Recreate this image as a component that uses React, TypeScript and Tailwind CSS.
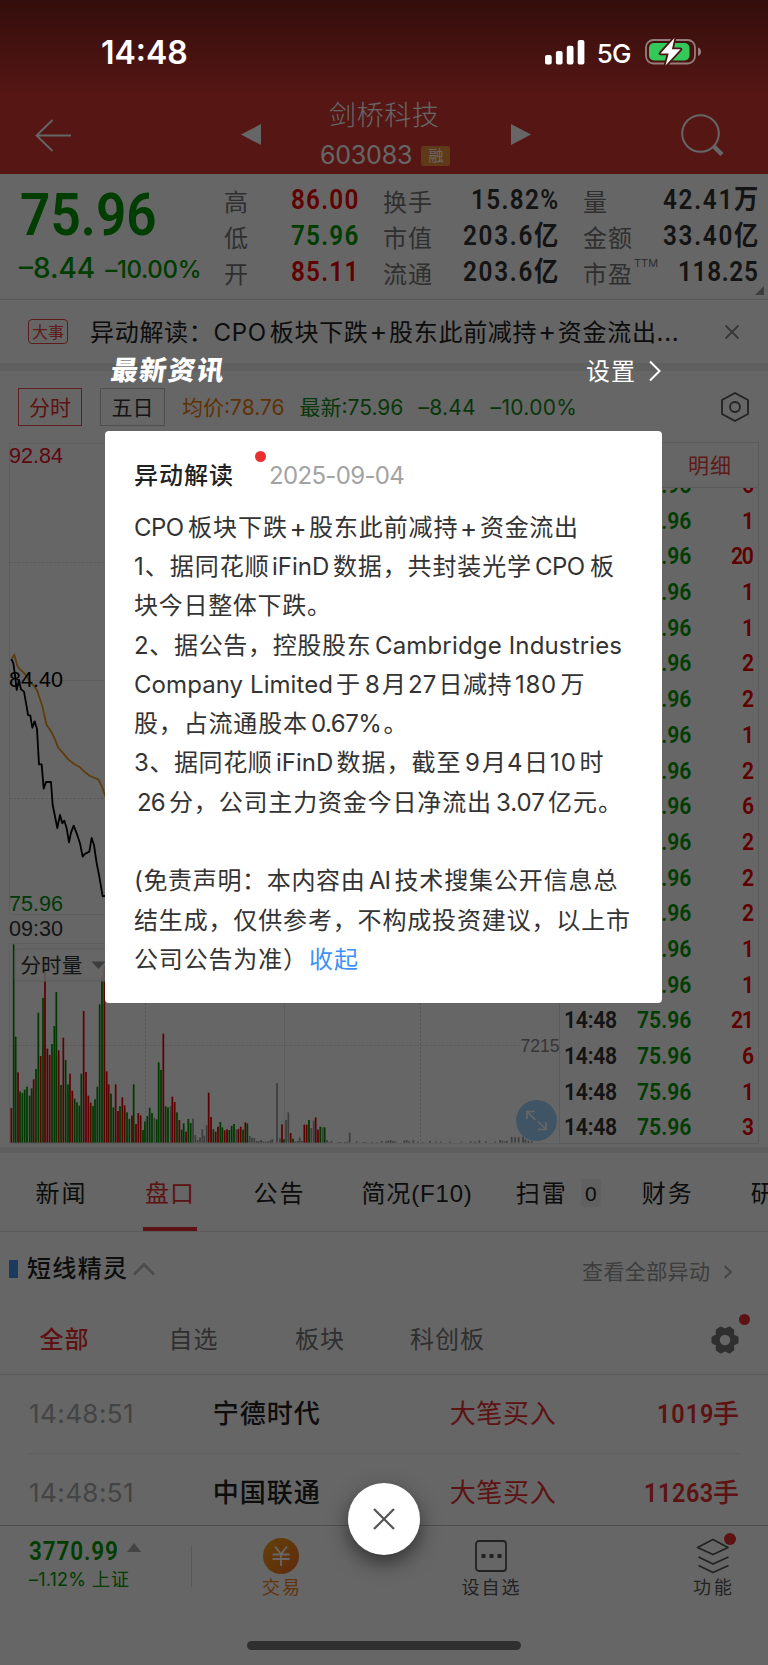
import { useLayoutEffect, useRef, type ReactNode } from "react";

/** Single line of text whose tracking is adjusted so that it takes up `w` pixels. */
function Fit({ w, className = "", children }: { w: number; className?: string; children: ReactNode }) {
  const ref = useRef<HTMLSpanElement>(null);
  useLayoutEffect(() => {
    const el = ref.current;
    if (!el) return;
    el.style.letterSpacing = "0px";
    el.style.marginRight = "0px";
    const gaps = Array.from(el.textContent ?? "").length - 1;
    if (gaps < 1) return;
    const tracking = (w - el.offsetWidth) / gaps;
    el.style.letterSpacing = `${tracking}px`;
    el.style.marginRight = `${-tracking}px`;
  }, [w]);
  return (
    <span ref={ref} className={`inline-block shrink-0 whitespace-nowrap leading-none ${className}`}>
      {children}
    </span>
  );
}

/** Narrow, sturdy figures used for prices and quantities. */
function Din({ w, className = "", children }: { w: number; className?: string; children: ReactNode }) {
  return (
    <span className={`flex shrink-0 ${className}`} style={{ width: w }}>
      <Fit w={w / 0.9} className="origin-left scale-x-90 font-['Roboto','Noto_Sans_CJK_SC',sans-serif] font-semibold">
        {children}
      </Fit>
    </span>
  );
}

type Bar = [number, number, string];
const G = "#009000";
const R = "#e60000";
const N = "#999999";
const bars: Bar[] = [
  [34, 534, R], [41, 43, G], [47, 320, G], [54, 427, R], [60, 484, G], [67, 489, G], [74, 479, G], [81, 470, G],
  [89, 497, G], [95, 475, G], [101, 448, R], [108, 417, G], [115, 248, G], [122, 378, R], [129, 204, G], [135, 80, R],
  [142, 356, R], [149, 375, R], [156, 342, G], [163, 288, G], [169, 186, G], [176, 361, R], [183, 465, G], [190, 323, R],
  [197, 390, G], [204, 463, G], [210, 431, R], [217, 482, R], [224, 506, G], [231, 517, G], [238, 527, G], [244, 431, G],
  [251, 243, R], [258, 426, R], [265, 497, R], [272, 518, R], [279, 528, G], [285, 508, G], [292, 470, G], [299, 223, G],
  [306, 140, G], [313, 108, R], [320, 424, R], [326, 463, R], [333, 491, G], [340, 532, G], [347, 463, R], [354, 543, R],
  [360, 528, G], [367, 502, R], [374, 526, R], [381, 547, G], [388, 567, G], [396, 557, R], [401, 463, G], [408, 582, R],
  [415, 549, R], [422, 556, R], [429, 600, G], [435, 574, G], [442, 558, G], [449, 533, G], [456, 549, G], [463, 563, N],
  [470, 568, G], [476, 397, G], [483, 420, G], [490, 311, R], [497, 529, G], [504, 532, G], [512, 528, N], [517, 500, R],
  [524, 516, R], [531, 547, G], [538, 570, R], [545, 599, G], [551, 580, G], [558, 605, R], [565, 567, G], [572, 579, G],
  [579, 566, N], [586, 615, N], [593, 630, N], [600, 622, N], [607, 598, N], [613, 617, N], [620, 586, N], [626, 488, R],
  [633, 561, R], [640, 598, G], [647, 605, R], [654, 590, R], [661, 576, G], [667, 592, G], [674, 601, R], [681, 598, R],
  [688, 600, G], [695, 588, G], [702, 582, G], [709, 599, N], [715, 597, R], [722, 590, R], [729, 599, G], [736, 577, R],
  [742, 580, G], [749, 618, N], [756, 623, N], [763, 624, N], [770, 633, N], [776, 633, N], [783, 630, N], [790, 634, N],
  [797, 635, N], [804, 634, N], [811, 631, N], [817, 627, N], [831, 459, N], [840, 625, N], [846, 583, R], [852, 628, G],
  [858, 570, N], [865, 547, N], [872, 609, R], [879, 626, G], [886, 634, N], [893, 633, N], [899, 622, N], [906, 633, N],
  [913, 584, R], [920, 584, R], [927, 570, G], [934, 594, N], [941, 572, N], [947, 562, R], [954, 599, R], [961, 590, G],
  [968, 592, N], [974, 592, G], [981, 630, N], [988, 636, N], [995, 633, N], [1015, 636, N], [1022, 636, N], [1035, 636, N],
  [1042, 635, N], [1049, 608, N], [1070, 634, N], [1090, 636, N], [1097, 636, N], [1117, 636, N], [1131, 636, N],
  [1145, 633, N], [1158, 634, N], [1165, 632, N], [1172, 630, N], [1179, 633, N], [1186, 634, N], [1213, 632, N],
  [1220, 630, N], [1227, 634, N], [1240, 631, N], [1254, 635, N], [1268, 636, N], [1290, 633, N], [1308, 635, N],
  [1322, 635, N], [1350, 635, N], [1384, 635, N], [1412, 634, N], [1425, 635, N], [1438, 631, N], [1458, 634, N],
  [1485, 635, N], [1500, 630, N], [1507, 632, N], [1514, 634, N], [1521, 632, N], [1535, 621, N], [1545, 622, N],
  [1556, 622, N], [1569, 620, N], [1576, 628, N], [1585, 632, N], [1595, 634, N],
];

const avgLine =
  "36,685 43,674 52,708 60,718 75,732 90,755 104,770 112,783 120,808 128,832 135,865 140,885 155,907 165,928 174,952 190,970 205,988 222,1002 240,1012 255,1027 270,1038 295,1048 305,1068 320,1110";
const priceLine =
  "34,687 40,700 45,735 50,780 57,750 63,778 72,785 80,830 84,855 91,857 97,893 104,874 111,897 117,1003 125,1003 131,1076 138,1056 153,1056 158,1125 172,1194 180,1155 187,1180 193,1172 200,1195 207,1237 213,1208 221,1187 230,1210 240,1240 248,1280 254,1272 268,1265 275,1224 282,1245 290,1300 298,1340 308,1399 320,1396";

function Header() {
  return (
    <header className="flex h-[174px] items-start bg-linear-to-b from-[#80241f] from-0% via-[#d43832] via-[92px] to-[#d43832] text-white">
      <svg className="mt-[118px] ml-[34px] h-9 w-10" viewBox="0 0 40 36" fill="none" stroke="currentColor" strokeWidth="1.8">
        <path d="M37 17.5H2.5M18.5 2 2.5 17.5 18.5 33" />
      </svg>
      <svg className="mt-[123px] ml-[166px] h-[23px] w-[22px]" viewBox="0 0 22 23" fill="currentColor">
        <path d="M1 11.5 21 1v21z" />
      </svg>
      <div className="ml-[58px] flex w-[134px] flex-col items-start pt-[102px]">
        <Fit w={110} className="ml-[9px] text-[27px] font-light">剑桥科技</Fit>
        <div className="mt-[14px] flex items-center text-[25px]">
          <Fit w={92} className="font-normal">603083</Fit>
          <span className="ml-[9px] flex h-5 w-[29px] items-center justify-center rounded-xs bg-[#ef8f3c] text-[15px] leading-none">融</span>
        </div>
      </div>
      <svg className="mt-[123px] ml-[56px] h-[23px] w-[22px]" viewBox="0 0 22 23" fill="currentColor">
        <path d="M21 11.5 1 1v21z" />
      </svg>
      <svg className="mt-[112px] ml-[149px] h-11 w-11" viewBox="0 0 44 44" fill="none" stroke="currentColor">
        <circle cx="19.5" cy="21.5" r="18.3" strokeWidth="2" />
        <path d="m33 34.5 8 8" strokeWidth="4.5" />
      </svg>
    </header>
  );
}

function Quote() {
  return (
    <section className="relative flex h-[126px] border-b border-[#dedede] bg-white pt-[9px]">
      <div className="w-[224px] pt-0.5 pl-[20px] text-[#009800]">
        <Din w={137} className="text-[59px]">75.96</Din>
        <div className="mt-[10px] -ml-px flex items-baseline">
          <Fit w={76} className="text-[28px] font-medium">–8.44</Fit>
          <Fit w={96} className="ml-[10px] text-[24px] font-medium">–10.00%</Fit>
        </div>
      </div>
      <div className="flex w-[134px] flex-col">
        {[["高", "86.00", "text-[#f00000]"], ["低", "75.96", "text-[#009800]"], ["开", "85.11", "text-[#f00000]"]].map(([k, v, c]) => (
          <div key={k} className="flex h-[35.7px] items-center justify-between">
            <span className="mt-[5px] text-[24px] leading-none text-[#777]">{k}</span>
            <Din w={67} className={`text-[27px] ${c}`}>{v}</Din>
          </div>
        ))}
      </div>
      <div className="ml-[25px] flex w-[175px] flex-col">
        {([["换手", "15.82%", 87], ["市值", "203.6亿", 95], ["流通", "203.6亿", 95]] as [string, string, number][]).map(([k, v, w]) => (
          <div key={k} className="flex h-[35.7px] items-center justify-between">
            <Fit w={49} className="mt-[5px] text-[24px] text-[#777]">{k}</Fit>
            <Din w={w} className="text-[27px] text-[#333]">{v}</Din>
          </div>
        ))}
      </div>
      <div className="ml-[25px] flex w-[175px] flex-col">
        {([["量", "42.41万", 95], ["金额", "33.40亿", 95], ["市盈", "118.25", 80]] as [string, string, number][]).map(([k, v, w]) => (
          <div key={k} className="flex h-[35.7px] items-center justify-between">
            <span className="flex items-start">
              <Fit w={49} className="mt-[5px] text-[24px] text-[#777]">{k}</Fit>
              {k === "市盈" && <Fit w={24} className="ml-[2px] text-[11px] text-[#777]">TTM</Fit>}
            </span>
            <Din w={w} className="text-[27px] text-[#333]">{v}</Din>
          </div>
        ))}
      </div>
      <svg className="absolute top-[112px] left-[755px] h-[9px] w-[9px]" viewBox="0 0 9 9">
        <path d="M9 0v9H0z" fill="#999" />
      </svg>
    </section>
  );
}

function NewsRow() {
  return (
    <section className="flex h-[63px] items-center bg-white">
      <span className="ml-[28px] flex h-[25px] w-10 items-center justify-center rounded border border-[#e9453f] text-[#e9453f]">
        <Fit w={32} className="text-[16px]">大事</Fit>
      </span>
      <Fit w={589} className="ml-[22px] text-[24px] text-[#222] [text-autospace:normal]">
        异动解读：CPO板块下跌<span className="px-px text-[27px] leading-none">+</span>股东此前减持<span className="px-px text-[27px] leading-none">+</span>资金流出...
      </Fit>
      <svg className="ml-[45px] h-4 w-4" viewBox="0 0 16 16" stroke="#8c8c8c" strokeWidth="1.8">
        <path d="m1.5 1.5 13 13M14.5 1.5l-13 13" />
      </svg>
    </section>
  );
}

function ChartTabs() {
  return (
    <section className="flex h-[59px] items-center bg-white pt-[13px] text-[21px]">
      <span className="ml-[18px] flex h-[38px] w-16 items-center justify-center border border-[#f05050] text-[#e93030]">
        <Fit w={42}>分时</Fit>
      </span>
      <span className="ml-[18px] flex h-[38px] w-[65px] items-center justify-center border border-[#c4c4c4] text-[#333]">
        <Fit w={42}>五日</Fit>
      </span>
      <Fit w={103} className="ml-[17px] text-[#f07c0c]">均价:78.76</Fit>
      <div className="ml-[15px] flex text-[#128a1a]">
        <Fit w={104}>最新:75.96</Fit>
        <Fit w={57} className="ml-[15px]">–8.44</Fit>
        <Fit w={86} className="ml-[15px]">–10.00%</Fit>
      </div>
      <svg className="ml-[142px] h-8 w-8" viewBox="0 0 32 32" fill="none" stroke="#555" strokeWidth="1.8">
        <path d="M16 2 29 9v14l-13 7L3 23V9z" strokeLinejoin="round" />
        <circle cx="16" cy="16" r="5" />
      </svg>
    </section>
  );
}

function Chart() {
  return (
    <svg className="h-[717px] w-[559px] shrink-0 font-['Liberation_Sans',Arial,sans-serif]" viewBox="0 0 559 717">
      <g stroke="#ebebeb" fill="none">
        <path d="M559 13.5H9.5v471M9.5 250.5H559M9.5 484.5H559M9.5 513.5V713.5H559M284.5 13V713M9.5 513.5H559" />
        <path d="M9.5 132.5H559M9.5 368.5H559M9.5 615.5H520M145.5 13V713M420.5 13V713" stroke="#d8d8d8" strokeDasharray="2 2" />
      </g>
      <g transform="translate(0 500) scale(.33333)">
        {bars.map(([x, y, c]) => (
          <rect key={x} x={x - 2.6} y={y} width="5.2" height={638 - y} fill={c} />
        ))}
      </g>
      <g transform="scale(.33333)" fill="none" strokeWidth="5.4" strokeLinejoin="round">
        <polyline points={avgLine} stroke="#e89a1c" />
        <polyline points={priceLine} stroke="#000" />
      </g>
      <g fontSize="21.6">
        <text x="9" y="32.8" fill="#ee1028">92.84</text>
        <text x="9" y="256.7" fill="#000">84.40</text>
        <text x="9" y="480.8" fill="#009010">75.96</text>
        <text x="9" y="505.6" fill="#333">09:30</text>
      </g>
      <rect x="15" y="519" width="100" height="32" rx="2" fill="#fff" fillOpacity=".8" stroke="#e4e4e4" />
      <text x="20.5" y="542.5" fontSize="20.6" fill="#333" fontFamily="Noto Sans CJK SC, sans-serif">分时量</text>
      <path d="M91.5 531.5h14l-7 7.5z" fill="#999" />
      <text x="520.5" y="621.5" fontSize="17.6" fill="#888">7215</text>
      <circle cx="536.5" cy="690.5" r="20.5" fill="#9fd4fc" />
      <path d="M527 689v-7.500h8M528 682.500l7.500 7.500M538 691.500l7.500 7.500M546 692v7.500h-8" fill="none" stroke="#fff" strokeWidth="1.7" />
    </svg>
  );
}

const trades: [string, string][] = [
  ["", "6"], ["", "1"], ["", "20"], ["", "1"], ["", "1"], ["", "2"], ["", "2"], ["", "1"], ["", "2"], ["", "6"],
  ["", "2"], ["", "2"], ["", "2"], ["", "1"], ["", "1"], ["14:48", "21"], ["14:48", "6"], ["14:48", "1"], ["14:48", "3"],
];

function Trades() {
  return (
    <div className="mt-3 flex h-[702px] w-[200px] flex-col border border-[#e4e4e4]">
      <div className="flex h-[45px] shrink-0 items-center border-b border-[#e4e4e4] pl-[128px] text-[21px] text-[#e9453f]">
        <Fit w={43}>明细</Fit>
      </div>
      <div className="flex min-h-0 flex-1 flex-col justify-end overflow-hidden">
        <div className="-mb-[3px]">
          {trades.map(([t, n], i) => (
            <div key={i} className="flex h-[35.7px] shrink-0 items-center text-[23.500px]">
              <span className="ml-1 flex w-[73px] text-[#333]">{t && <Din w={53}>{t}</Din>}</span>
              <Din w={54} className="text-[#009800]">75.96</Din>
              <span className="flex flex-1 justify-end pr-[4px] text-[#f00000]">
                <Din w={n.length > 1 ? 23 : 12.500}>{n}</Din>
              </span>
            </div>
          ))}
        </div>
      </div>
    </div>
  );
}

function InfoTabs() {
  return (
    <nav className="flex h-[79px] items-center overflow-hidden border-b border-[#e0e0e0] bg-white text-[24px] text-[#222]">
      <Fit w={50} className="mt-1 ml-[35.500px]">新闻</Fit>
      <span className="ml-[57px] flex h-full w-[54px] flex-col items-center justify-between text-[#e93030]">
        <Fit w={49} className="mt-[29px]">盘口</Fit>
        <span className="h-1 w-[54px] bg-[#e93030]" />
      </span>
      <Fit w={50} className="mt-1 ml-[57px]">公告</Fit>
      <Fit w={110} className="mt-1 ml-[58px] font-['Liberation_Sans','Noto_Sans_CJK_SC',sans-serif]">简况(F10)</Fit>
      <Fit w={50} className="mt-1 ml-[44px]">扫雷</Fit>
      <span className="mt-0.5 ml-[15px] flex h-[28px] w-5 shrink-0 items-center justify-center bg-[#f2f2f2] font-['Liberation_Sans',sans-serif] text-[21px] leading-none">0</span>
      <Fit w={50} className="mt-1 ml-[41px]">财务</Fit>
      <Fit w={50} className="mt-1 ml-[59px]">研</Fit>
    </nav>
  );
}

function Section() {
  return (
    <section className="bg-white">
      <div className="flex h-[74px] items-center">
        <span className="ml-[9px] h-[18px] w-[9px] bg-[#4691ee]" />
        <Fit w={100} className="ml-[9px] text-[24px] font-medium text-[#222]">短线精灵</Fit>
        <svg className="ml-[6px] h-4 w-[22px]" viewBox="0 0 22 16" fill="none" stroke="#bbb" strokeWidth="2.800">
          <path d="m1 13.500 10-10 10 10" />
        </svg>
        <Fit w={128} className="mt-[4px] ml-[427px] text-[21px] text-[#999]">查看全部异动</Fit>
        <svg className="mt-[5px] ml-[13px] h-3.5 w-[10px]" viewBox="0 0 10 14" fill="none" stroke="#aaa" strokeWidth="1.8">
          <path d="m1.500 1 6.500 6-6.500 6" />
        </svg>
      </div>
      <div className="relative flex h-[69px] items-center border-b border-[#e0e0e0] text-[24px] text-[#777]">
        <Fit w={49} className="ml-[39.500px] font-medium text-[#e93030]">全部</Fit>
        <Fit w={49} className="ml-[80px]">自选</Fit>
        <Fit w={49} className="ml-[77.500px]">板块</Fit>
        <Fit w={74} className="ml-[66px]">科创板</Fit>
        <svg className="ml-[227px] h-7 w-7" viewBox="0 0 28 28">
          <path
            fill="#777"
            fillRule="evenodd"
            strokeLinejoin="round"
            stroke="#777"
            strokeWidth="2"
            d="M9.500 1.500 14 3.700 18.500 1.500 22.300 4.200 22 9.200 26.500 11.500v5L22 18.800l.3 5L18.500 26.500 14 24.300 9.500 26.500 5.700 23.800 6 18.800 1.500 16.500v-5L6 9.200l-.3-5zM14 7.800a6.200 6.200 0 1 0 0 12.400 6.200 6.200 0 0 0 0-12.400z"
          />
        </svg>
        <span className="absolute top-[8px] left-[739px] h-[11px] w-[11px] rounded-full bg-[#e93030]" />
      </div>
      {([["宁德时代", "1019", 56], ["中国联通", "11263", 69]] as [string, string, number][]).map(([name, qty, w], i) => (
        <div key={name} className="px-[27px]">
          <div className={`flex items-center text-[26px] ${i === 0 ? "h-[79px] border-b border-[#f0f0f0]" : "h-[71px] pt-[6px]"}`}>
            <Fit w={105} className="ml-[2px] text-[#aaa]">14:48:51</Fit>
            <Fit w={107} className="ml-[79px] font-medium text-[#222]">{name}</Fit>
            <Fit w={106} className="ml-[130px] text-[#e93030]">大笔买入</Fit>
            <span className="flex flex-1 items-center justify-end pr-[2px] text-[#e93030]">
              <Din w={w}>{qty}</Din>
              <span className="font-medium leading-none">手</span>
            </span>
          </div>
        </div>
      ))}
    </section>
  );
}

function BottomBar() {
  return (
    <footer className="flex h-[139px] border-t border-[#c0c0c0] bg-white text-[18px] text-[#555]">
      <div className="w-[191px] pt-[13px] pl-[29px] text-[#009800]">
        <div className="flex items-center">
          <Din w={89} className="text-[25px]">3770.99</Din>
          <svg className="-mt-[8px] ml-[9px] h-[9px] w-[14px]" viewBox="0 0 14 9">
            <path d="m7 0 7 9H0z" fill="#aaa" />
          </svg>
        </div>
        <div className="mt-[7px] flex">
          <Fit w={57}>–1.12%</Fit>
          <Fit w={37} className="ml-[6px]">上证</Fit>
        </div>
      </div>
      <span className="mt-[19px] h-[42px] w-px bg-[#dcdcdc]" />
      <div className="ml-[62px] flex w-[54px] flex-col items-center pt-3 text-[#f58220]">
        <svg className="h-9 w-9" viewBox="0 0 36 36">
          <defs>
            <linearGradient id="coin" x1="0" y1="0" x2="1" y2="1">
              <stop offset="0" stopColor="#f8a21c" />
              <stop offset="1" stopColor="#ef6a1c" />
            </linearGradient>
          </defs>
          <circle cx="18" cy="18" r="18" fill="url(#coin)" />
          <path d="m12 8.500 6 7.500 6-7.500M9.500 16.500h17M9.500 21h17M18 16v12" fill="none" stroke="#fff" strokeWidth="1.8" />
        </svg>
        <Fit w={38} className="mt-[5px]">交易</Fit>
      </div>
      <div className="ml-[151.500px] flex w-[62px] flex-col items-center pt-3.5">
        <svg className="h-8 w-8" viewBox="0 0 32 32" fill="none" stroke="#555" strokeWidth="1.800">
          <rect x="1" y="1" width="30" height="30" rx="3" />
          <path d="M6.500 16h4M14.500 16h4M22.500 16h4" strokeWidth="4" />
        </svg>
        <Fit w={58} className="mt-[7px]">设自选</Fit>
      </div>
      <div className="relative ml-[169px] flex w-[44px] flex-col items-center pt-3">
        <svg className="h-9 w-9" viewBox="0 0 36 36" fill="none" stroke="#555" strokeWidth="1.800">
          <path d="M18 1.500 33 9.500 18 16.500 2.500 9.500zM3.500 19 18 26l15.500-7M3.500 27.500l14.500 7 15.500-7" strokeLinejoin="round" />
        </svg>
        <Fit w={39} className="mt-[5px]">功能</Fit>
        <span className="absolute top-[7px] left-[33px] h-3 w-3 rounded-full bg-[#e93030]" />
      </div>
    </footer>
  );
}

function StatusBar() {
  return (
    <div className="absolute inset-x-0 top-0 flex h-[100px] items-center text-white">
      <Fit w={87} className="mt-[6px] ml-[101px] text-[32px] font-semibold">14:48</Fit>
      <svg className="mt-[3px] ml-[357px] h-[26px] w-10" viewBox="0 0 40 26" fill="currentColor">
        <rect x="0" y="16" width="6.700" height="9.500" rx="2" />
        <rect x="10.900" y="12" width="6.700" height="13.500" rx="2" />
        <rect x="21.800" y="6.700" width="6.700" height="18.800" rx="2" />
        <rect x="32.700" y="1" width="6.700" height="24.500" rx="2" />
      </svg>
      <Fit w={35} className="mt-[7px] ml-[12px] text-[26px] font-medium">5G</Fit>
      <svg className="mt-[4px] ml-[13.500px] h-7 w-[58px]" viewBox="0 0 58 28">
        <rect x="1" y="2" width="49" height="23.500" rx="7.500" fill="none" stroke="#fff" strokeOpacity=".45" strokeWidth="1.800" />
        <path d="M53 9.500c2.500.8 3 2.500 3 4.300s-.5 3.500-3 4.300z" fill="#fff" fillOpacity=".45" />
        <rect x="4" y="5" width="40.500" height="17.500" rx="5" fill="#34c759" />
        <path d="M29.500 0 15.500 15.500h8.200L20.500 27.500 35.500 11.300h-8.600z" fill="#fff" stroke="#4a1412" strokeWidth="3.600" strokeLinejoin="round" paintOrder="stroke" />
      </svg>
    </div>
  );
}

/** Runs of a paragraph line: offset from the line's left edge, width, text. */
type Run = [number, number, string];
const lines: Run[][] = [
  [[0, 50, "CPO"], [54, 99, "板块下跌"], [155.5, 15, "+"], [175, 148.5, "股东此前减持"], [326, 15, "+"], [346, 98, "资金流出"]],
  [[0, 135, "1、据同花顺"], [138, 57, "iFinD"], [199, 198, "数据，共封装光学"], [401, 50, "CPO"], [456, 24, "板"]],
  [[0, 197, "块今日整体下跌。"]],
  [[0, 237, "2、据公告，控股股东"], [241, 247, "Cambridge Industries"]],
  [[0, 199, "Company Limited"], [202, 24, "于"], [231, 16, "8"], [248, 24, "月"], [274, 28, "27"], [304.5, 73, "日减持"], [381, 41.5, "180"], [426.5, 24, "万"]],
  [[0, 173, "股，占流通股本"], [177, 71, "0.67%"], [249.5, 24, "。"]],
  [[0, 138, "3、据同花顺"], [142, 57, "iFinD"], [202.5, 124, "数据，截至"], [331, 16, "9"], [348, 24, "月"], [373, 16, "4"], [390, 24, "日"], [416, 26, "10"], [445.5, 24, "时"]],
  [[3, 29, "26"], [35, 322, "分，公司主力资金今日净流出"], [362, 49, "3.07"], [414, 74, "亿元。"]],
  [],
  [[0, 231, "(免责声明：本内容由"], [235, 22, "AI"], [260.5, 223, "技术搜集公开信息总"]],
  [[0, 496, "结生成，仅供参考，不构成投资建议，以上市"]],
];

function Line({ runs }: { runs: Run[] }) {
  return (
    <div className="flex h-[39.3px] items-center">
      {runs.map(([x, w, text], i) => (
        <span
          key={i}
          className="flex shrink-0"
          style={{ marginLeft: i === 0 ? x : 0, width: i + 1 < runs.length ? runs[i + 1][0] - x : w }}
        >
          <Fit w={w} className={text === "+" ? "text-[26px]" : ""}>{text}</Fit>
        </span>
      ))}
    </div>
  );
}

function Modal() {
  return (
    <div className="absolute top-[355px] left-[105px] w-[557px]">
      <div className="flex h-[76px] items-start text-white">
        <Fit w={113} className="mt-[2px] ml-[6px] -skew-x-8 text-[27px] font-black">最新资讯</Fit>
        <Fit w={49} className="mt-[5px] ml-[362px] text-[24px]">设置</Fit>
        <svg className="mt-[5px] ml-[13px] h-[22px] w-3.5 shrink-0" viewBox="0 0 14 22" fill="none" stroke="currentColor" strokeWidth="2">
          <path d="m2 1.500 9.500 9.500L2 20.500" />
        </svg>
      </div>
      <div className="h-[572px] rounded bg-white pt-[33px] pl-[29px] text-[24px] text-[#333]">
        <div className="relative flex h-6 items-center">
          <Fit w={99} className="font-medium text-[#222]">异动解读</Fit>
          <span className="absolute -top-[13px] left-[121px] h-[11px] w-[11px] rounded-full bg-[#e93030]" />
          <Fit w={136} className="ml-[36px] text-[#a3a3a3]">2025-09-04</Fit>
        </div>
        <div className="mt-[20px]">
          {lines.map((runs, i) => (
            <Line key={i} runs={runs} />
          ))}
          <div className="flex h-[39.3px] items-center">
            <Fit w={173}>公司公告为准）</Fit>
            <Fit w={49} className="ml-[2px] text-[#3d92f5]">收起</Fit>
          </div>
        </div>
      </div>
    </div>
  );
}

export default function App() {
  return (
    <div className="relative flex h-[1665px] w-[768px] flex-col overflow-hidden bg-white font-['Inter','Noto_Sans_CJK_SC',sans-serif]">
      <Header />
      <Quote />
      <NewsRow />
      <div className="h-2 bg-[#f1f1f1]" />
      <ChartTabs />
      <section className="flex h-[717px] bg-white">
        <Chart />
        <Trades />
      </section>
      <div className="h-[6px] bg-[#ededed]" />
      <InfoTabs />
      <Section />
      <BottomBar />
      <div className="absolute inset-0 bg-black/60" />
      <StatusBar />
      <Modal />
      <button aria-label="关闭" className="absolute top-[1483px] left-[348px] flex h-[72px] w-[72px] items-center justify-center rounded-full bg-white shadow-[0_8px_20px_rgba(0,0,0,0.5)]">
        <svg className="h-[22px] w-[22px]" viewBox="0 0 22 22" stroke="#555" strokeWidth="2.200">
          <path d="m1 1 20 20M21 1 1 21" />
        </svg>
      </button>
      <div className="absolute top-[1641px] left-[247px] h-[9px] w-[274px] rounded-full bg-[#303030]" />
    </div>
  );
}
